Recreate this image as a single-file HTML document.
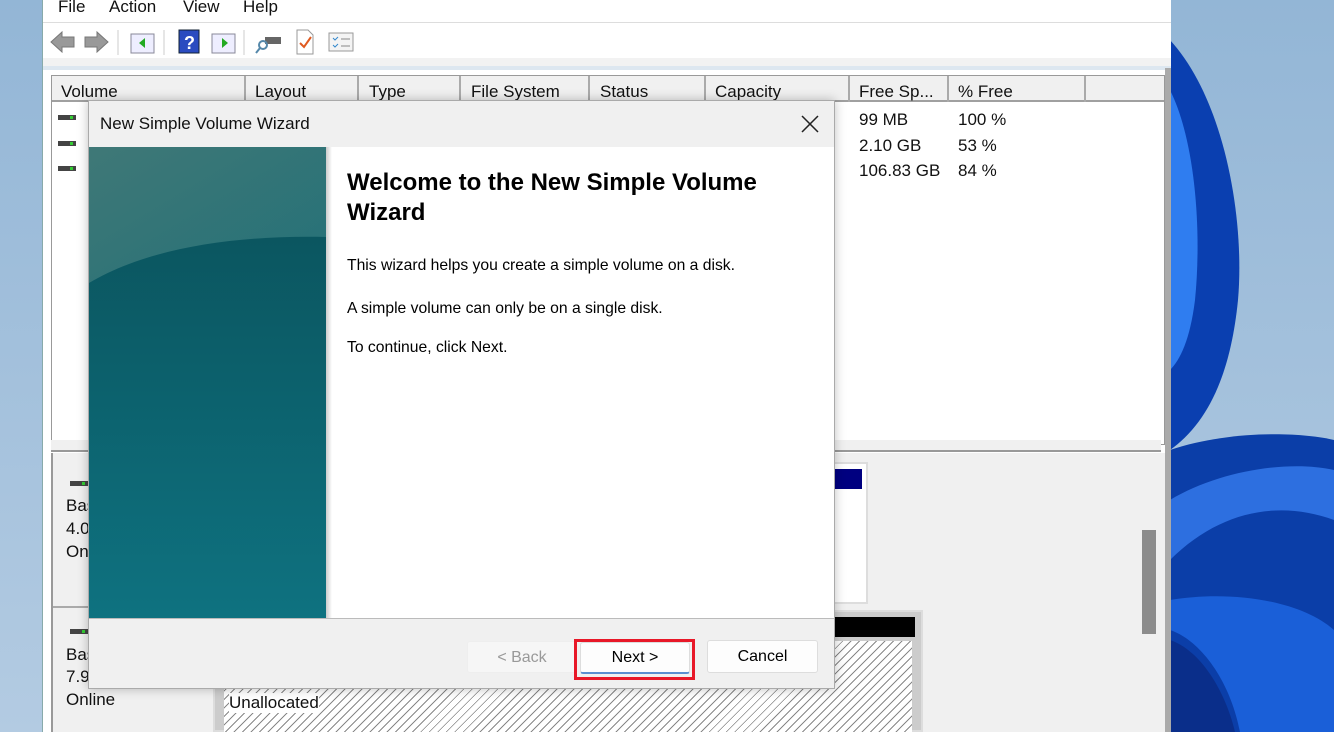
<!DOCTYPE html>
<html><head><meta charset="utf-8"><style>
*{margin:0;padding:0;box-sizing:border-box}
body{width:1334px;height:732px;overflow:hidden;position:relative;font-family:"Liberation Sans",sans-serif;background:#a9c2dc}
.a{position:absolute}
.t{font-size:17px;color:#111;white-space:nowrap}
.d{position:absolute;width:18px;height:5px;background:#444}
.d:after{content:"";position:absolute;left:12px;top:1px;width:3px;height:3px;background:#3c3}
</style></head><body>
<svg class="a" style="left:0;top:0" width="1334" height="732">
<defs><linearGradient id="bg" x1="0" y1="0" x2="0" y2="1"><stop offset="0" stop-color="#93b6d6"/><stop offset="1" stop-color="#b3cbe2"/></linearGradient></defs>
<rect width="1334" height="732" fill="url(#bg)"/>
<path d="M1170 40 C1225 100 1245 220 1238 300 C1230 380 1205 425 1170 450 Z" fill="#0a3fb0"/>
<path d="M1170 90 C1195 140 1202 230 1195 300 C1190 340 1180 360 1170 370 Z" fill="#2f7df0"/>
<path d="M1170 450 C1230 430 1300 432 1334 440 L1334 732 L1170 732 Z" fill="#0b3ea8"/>
<path d="M1170 500 C1220 470 1290 460 1334 470 L1334 520 C1280 500 1220 510 1170 560 Z" fill="#2d6fe0"/>
<path d="M1170 600 C1230 590 1300 600 1334 630 L1334 732 L1240 732 C1230 680 1200 640 1170 630 Z" fill="#1a5fd8"/>
<path d="M1170 640 C1200 650 1225 690 1235 732 L1170 732 Z" fill="#0a2e8a"/>
</svg>
<div class="a" style="left:42px;top:0;width:1129px;height:732px;background:#fff;border-left:1px solid #8aa"></div>
<div class="a t" style="left:58px;top:-3px">File</div>
<div class="a t" style="left:109px;top:-3px">Action</div>
<div class="a t" style="left:183px;top:-3px">View</div>
<div class="a t" style="left:243px;top:-3px">Help</div>
<div class="a" style="left:43px;top:22px;width:1128px;height:1px;background:#ddd"></div>
<svg class="a" style="left:48px;top:27px" width="320" height="30">
<path d="M3 15 L14 5 L14 10 L26 10 L26 20 L14 20 L14 25 Z" fill="#999" stroke="#777"/>
<path d="M60 15 L49 5 L49 10 L37 10 L37 20 L49 20 L49 25 Z" fill="#999" stroke="#777"/>
<line x1="70" y1="3" x2="70" y2="28" stroke="#ccc"/>
<rect x="83" y="7" width="23" height="19" fill="#eef" stroke="#889"/><path d="M97 11 L91 16 L97 21Z" fill="#2a2"/>
<line x1="116" y1="3" x2="116" y2="28" stroke="#ccc"/>
<rect x="131" y="3" width="20" height="23" fill="#2a4bc0" stroke="#123"/><text x="136" y="22" fill="#fff" font-size="18" font-weight="bold" font-family="Liberation Sans">?</text>
<rect x="164" y="7" width="23" height="19" fill="#eef" stroke="#889"/><path d="M174 11 L180 16 L174 21Z" fill="#2a2"/>
<line x1="196" y1="3" x2="196" y2="28" stroke="#ccc"/>
<rect x="217" y="10" width="16" height="7" fill="#666"/><circle cx="215" cy="18" r="4" fill="none" stroke="#58a" stroke-width="2"/><line x1="212" y1="21" x2="208" y2="26" stroke="#58a" stroke-width="2"/>
<path d="M249 3 L260 3 L265 8 L265 27 L249 27Z" fill="#fff" stroke="#999"/><path d="M252 16 L256 20 L263 10" fill="none" stroke="#e05a20" stroke-width="2"/>
<rect x="281" y="6" width="24" height="18" fill="#f4f4f4" stroke="#999"/><path d="M285 11 l2 2 l3-3 M285 18 l2 2 l3-3" stroke="#38c" fill="none"/><path d="M293 12h9M293 19h9" stroke="#888"/>
</svg>
<div class="a" style="left:43px;top:58px;width:1128px;height:10px;background:#f2f2f2"></div>
<div class="a" style="left:43px;top:66px;width:1128px;height:4px;background:#dde7f0"></div>
<div class="a" style="left:51px;top:75px;width:1114px;height:370px;background:#fff;border:1px solid #999"></div>
<div class="a" style="left:52px;top:76px;width:1112px;height:26px;background:#f0f0f0;border-bottom:2px solid #a0a0a0"></div>
<div class="a t" style="left:61px;top:82px">Volume</div>
<div class="a" style="left:244px;top:76px;width:2px;height:26px;background:#aaa"></div>
<div class="a t" style="left:255px;top:82px">Layout</div>
<div class="a" style="left:357px;top:76px;width:2px;height:26px;background:#aaa"></div>
<div class="a t" style="left:369px;top:82px">Type</div>
<div class="a" style="left:459px;top:76px;width:2px;height:26px;background:#aaa"></div>
<div class="a t" style="left:471px;top:82px">File System</div>
<div class="a" style="left:588px;top:76px;width:2px;height:26px;background:#aaa"></div>
<div class="a t" style="left:600px;top:82px">Status</div>
<div class="a" style="left:704px;top:76px;width:2px;height:26px;background:#aaa"></div>
<div class="a t" style="left:715px;top:82px">Capacity</div>
<div class="a" style="left:848px;top:76px;width:2px;height:26px;background:#aaa"></div>
<div class="a t" style="left:859px;top:82px">Free Sp...</div>
<div class="a" style="left:947px;top:76px;width:2px;height:26px;background:#aaa"></div>
<div class="a t" style="left:958px;top:82px">% Free</div>
<div class="a" style="left:1084px;top:76px;width:2px;height:26px;background:#aaa"></div>
<div class="d" style="left:58px;top:115px"></div>
<div class="d" style="left:58px;top:141px"></div>
<div class="d" style="left:58px;top:166px"></div>
<div class="a t" style="left:859px;top:110px">99 MB</div><div class="a t" style="left:958px;top:110px">100 %</div>
<div class="a t" style="left:859px;top:136px">2.10 GB</div><div class="a t" style="left:958px;top:136px">53 %</div>
<div class="a t" style="left:859px;top:161px">106.83 GB</div><div class="a t" style="left:958px;top:161px">84 %</div>
<div class="a" style="left:51px;top:440px;width:1110px;height:12px;background:#f0f0f0;border-bottom:2px solid #999"></div>
<div class="a" style="left:1165px;top:68px;width:6px;height:664px;background:#aaa"></div>
<div class="a" style="left:51px;top:453px;width:1114px;height:279px;background:#f0f0f0"></div>
<div class="a" style="left:51px;top:453px;width:2px;height:279px;background:#999"></div>
<div class="a" style="left:1142px;top:530px;width:14px;height:104px;background:#8c8c8c"></div>
<div class="a" style="left:53px;top:606px;width:170px;height:2px;background:#aaa"></div>
<div class="d" style="left:70px;top:481px"></div>
<div class="d" style="left:70px;top:629px"></div>
<div class="a t" style="left:66px;top:496px">Bas</div><div class="a t" style="left:66px;top:519px">4.0</div><div class="a t" style="left:66px;top:542px">On</div>
<div class="a t" style="left:66px;top:645px">Bas</div><div class="a t" style="left:66px;top:667px">7.9</div><div class="a t" style="left:66px;top:690px">Online</div>
<div class="a" style="left:820px;top:462px;width:48px;height:142px;border:2px solid #ddd;background:#fff"></div>
<div class="a" style="left:820px;top:469px;width:42px;height:20px;background:#000080"></div>
<div class="a" style="left:213px;top:610px;width:710px;height:122px;border:2px solid #ddd;background:#ccc"></div>
<div class="a" style="left:217px;top:617px;width:698px;height:20px;background:#000"></div>
<div class="a" style="left:224px;top:641px;width:688px;height:91px;background:repeating-linear-gradient(135deg,#fff 0 5px,#888 5px 6px)"></div>
<div class="a t" style="left:229px;top:693px;background:#fff">Unallocated</div>
<div class="a" style="left:88px;top:100px;width:747px;height:589px;background:#f0f0f0;border:1px solid #aaa;box-shadow:0 0 10px rgba(0,0,0,.25)"></div>
<div class="a t" style="left:100px;top:114px">New Simple Volume Wizard</div>
<svg class="a" style="left:801px;top:115px" width="18" height="18"><path d="M1 1L17 17M17 1L1 17" stroke="#222" stroke-width="1.5"/></svg>
<div class="a" style="left:89px;top:147px;width:745px;height:471px;background:#fff"></div>
<svg class="a" style="left:89px;top:147px" width="237" height="471">
<defs><linearGradient id="tl" x1="0" y1="0" x2="0.3" y2="1"><stop offset="0" stop-color="#3f7877"/><stop offset="1" stop-color="#0e6b78"/></linearGradient>
<linearGradient id="td" x1="0" y1="0" x2="0" y2="1"><stop offset="0" stop-color="#0b5660"/><stop offset="1" stop-color="#0e7280"/></linearGradient></defs>
<rect width="237" height="471" fill="url(#tl)"/>
<path d="M0 136 C60 100 150 88 237 90 L237 471 L0 471Z" fill="url(#td)"/>
</svg>
<div class="a" style="left:326px;top:147px;width:6px;height:471px;background:linear-gradient(90deg,#ccc,#fff)"></div>
<div class="a" style="left:347px;top:168px;font-size:24px;font-weight:bold;color:#000;line-height:30px;width:460px">Welcome to the New Simple Volume Wizard</div>
<div class="a" style="left:347px;top:257px;font-size:15.7px;color:#000;white-space:nowrap">This wizard helps you create a simple volume on a disk.</div>
<div class="a" style="left:347px;top:300px;font-size:15.7px;color:#000;white-space:nowrap">A simple volume can only be on a single disk.</div>
<div class="a" style="left:347px;top:339px;font-size:15.7px;color:#000;white-space:nowrap">To continue, click Next.</div>
<div class="a" style="left:89px;top:618px;width:745px;height:1px;background:#bbb"></div>
<div class="a" style="left:467px;top:641px;width:110px;height:32px;background:#f6f6f6;border:1px solid #eee;border-radius:3px;font-size:16px;color:#999;text-align:center;line-height:31px">&lt; Back</div>
<div class="a" style="left:574px;top:639px;width:121px;height:41px;border:3px solid #e81828"></div>
<div class="a" style="left:580px;top:642px;width:110px;height:32px;background:#fdfdfd;border:1px solid #ddd;border-bottom:2px solid #5a8fd0;border-radius:3px;font-size:16px;color:#000;text-align:center;line-height:30px">Next &gt;</div>
<div class="a" style="left:707px;top:640px;width:111px;height:33px;background:#fdfdfd;border:1px solid #ddd;border-radius:3px;font-size:16px;color:#000;text-align:center;line-height:32px">Cancel</div>
</body></html>
